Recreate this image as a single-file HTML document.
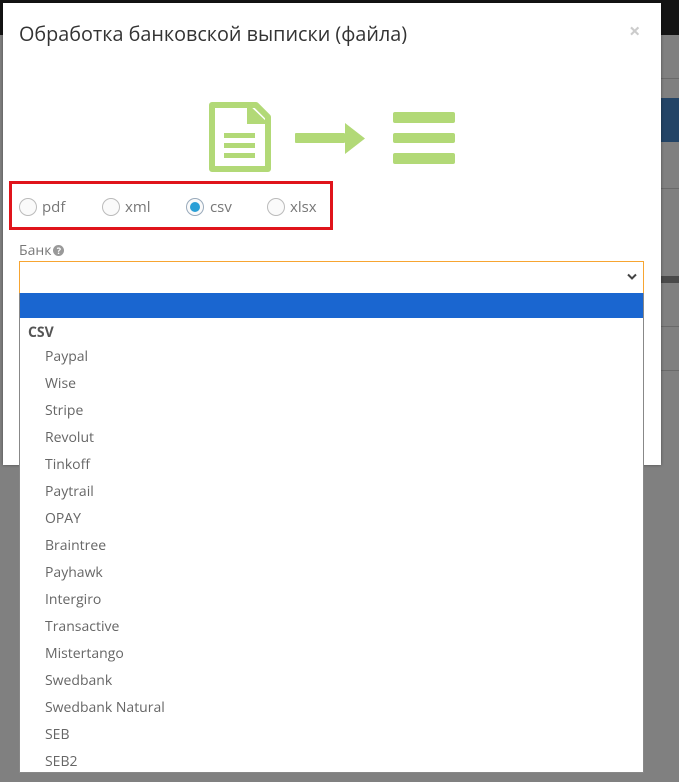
<!DOCTYPE html>
<html><head><meta charset="utf-8"><style>
*{box-sizing:border-box;margin:0;padding:0}
body{width:679px;height:782px;overflow:hidden;background:#808080;font-family:"Open Sans","Liberation Sans","DejaVu Sans",sans-serif;position:relative}
.abs{position:absolute}
.modal{left:3px;top:3px;width:658px;height:462px;background:#fff;box-shadow:0 0 3px rgba(0,0,0,.4)}
.title{left:19px;top:20px;font-size:19.8px;color:#333;white-space:nowrap}
.close{left:629px;top:17px;font-size:20px;color:#ccc;font-weight:bold}
.redbox{left:9px;top:181px;width:324px;height:49px;border:3px solid #e0141b}
.radio{width:18px;height:18px;border:1px solid #bbb;border-radius:50%;background:#fafafa;top:198px}
.radio.on{border-color:#9ab}
.radio.on::after{content:"";position:absolute;left:3px;top:3px;width:10px;height:10px;border-radius:50%;background:#2a9fd6}
.rl{top:197px;font-size:15px;color:#777}
.lbl{left:19px;top:241px;font-size:14px;color:#777}
.q{display:inline-block;width:11px;height:11px;border-radius:50%;background:#999;color:#fff;font-size:9px;text-align:center;line-height:11px;font-weight:bold;vertical-align:1px;margin-left:2px}
.select{left:19px;top:261px;width:625px;height:33px;border:1px solid #f7a531;background:#fff}
.list{left:19px;top:293px;width:625px;height:480px;background:#fff;border:1px solid #888;border-top:none}
.hl{left:0;top:0;width:100%;height:25px;background:#1a66d0}
.it{left:25px;font-size:14px;color:#666;white-space:nowrap}
.grp{left:8px;font-size:14px;font-weight:bold;color:#555}
</style></head><body>
<div class="abs" style="left:0;top:0;width:679px;height:35px;background:#141414"></div>
<div class="abs" style="left:661px;top:98px;width:18px;height:44px;background:#234466"></div>
<div class="abs" style="left:661px;top:78px;width:18px;height:1px;background:#6a6a6a"></div>
<div class="abs" style="left:661px;top:188px;width:18px;height:1px;background:#6a6a6a"></div>
<div class="abs" style="left:661px;top:276px;width:18px;height:7px;background:#4a4a4a"></div>
<div class="abs" style="left:661px;top:326px;width:18px;height:1px;background:#6a6a6a"></div>
<div class="abs" style="left:661px;top:370px;width:18px;height:1px;background:#6a6a6a"></div>
<div class="abs modal"></div>
<div class="abs title">Обработка банковской выписки (файла)</div>
<div class="abs close">×</div>
<svg class="abs" style="left:0;top:0" width="679" height="200">
<path d="M212 105 H256 L268 117 V169 H212 Z" fill="none" stroke="#b2d977" stroke-width="6" stroke-linejoin="round"/>
<path d="M247 103 V124 H269" fill="#b2d977"/>
<rect x="224" y="133" width="31" height="5" fill="#b2d977"/>
<rect x="224" y="143" width="31" height="5" fill="#b2d977"/>
<rect x="224" y="153" width="31" height="5" fill="#b2d977"/>
<rect x="295" y="133" width="50" height="10" rx="1" fill="#b2d977"/>
<path d="M345 123 L365 138.5 L345 154 Z" fill="#b2d977"/>
<rect x="393" y="112" width="62" height="11" rx="2" fill="#b2d977"/>
<rect x="393" y="133" width="62" height="10" rx="2" fill="#b2d977"/>
<rect x="393" y="153" width="62" height="11" rx="2" fill="#b2d977"/>
</svg>
<div class="abs redbox"></div>
<div class="abs radio" style="left:19px"></div><div class="abs rl" style="left:42px">pdf</div>
<div class="abs radio" style="left:102px"></div><div class="abs rl" style="left:125px">xml</div>
<div class="abs radio on" style="left:186px"></div><div class="abs rl" style="left:210px">csv</div>
<div class="abs radio" style="left:267px"></div><div class="abs rl" style="left:290px">xlsx</div>
<div class="abs lbl">Банк<span class="q">?</span></div>
<div class="abs select"><svg class="abs" style="left:607px;top:11px" width="10" height="8"><path d="M1 1.5 L5 5.5 L9 1.5" fill="none" stroke="#444" stroke-width="2"/></svg></div>
<div class="abs list">
<div class="abs hl"></div>
<div class="abs grp" style="top:30px">CSV</div>
<div class="abs it" style="top:54px">Paypal</div>
<div class="abs it" style="top:81px">Wise</div>
<div class="abs it" style="top:108px">Stripe</div>
<div class="abs it" style="top:135px">Revolut</div>
<div class="abs it" style="top:162px">Tinkoff</div>
<div class="abs it" style="top:189px">Paytrail</div>
<div class="abs it" style="top:216px">OPAY</div>
<div class="abs it" style="top:243px">Braintree</div>
<div class="abs it" style="top:270px">Payhawk</div>
<div class="abs it" style="top:297px">Intergiro</div>
<div class="abs it" style="top:324px">Transactive</div>
<div class="abs it" style="top:351px">Mistertango</div>
<div class="abs it" style="top:378px">Swedbank</div>
<div class="abs it" style="top:405px">Swedbank Natural</div>
<div class="abs it" style="top:432px">SEB</div>
<div class="abs it" style="top:459px">SEB2</div>
</div>
</body></html>
